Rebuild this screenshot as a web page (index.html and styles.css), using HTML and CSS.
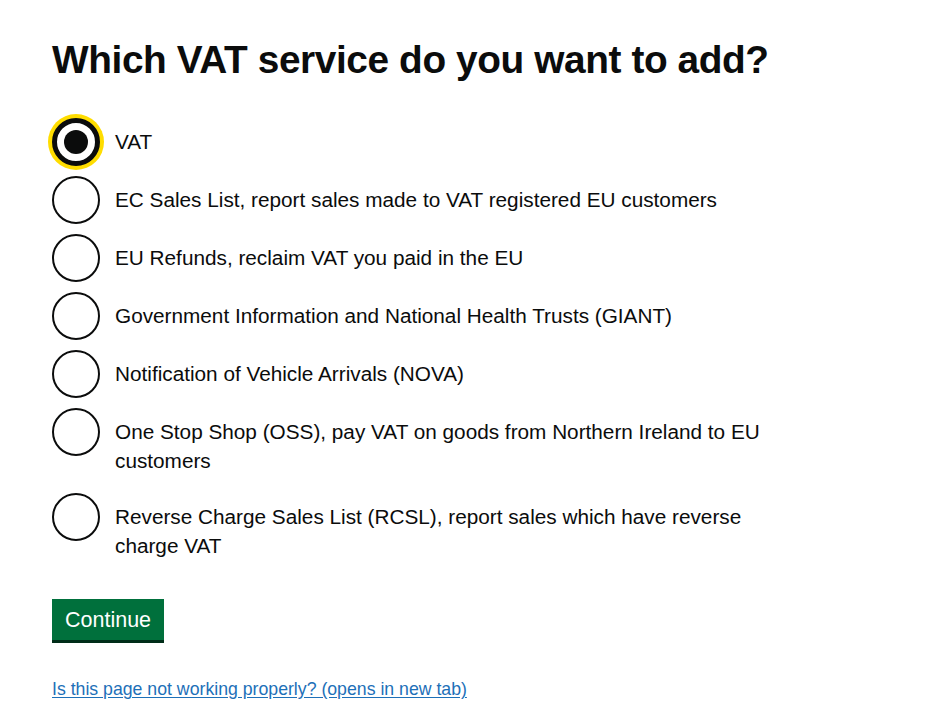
FILE: index.html
```html
<!DOCTYPE html>
<html lang="en">
<head>
<meta charset="utf-8">
<title>Which VAT service do you want to add?</title>
<link rel="stylesheet" href="styles.css">
</head>
<body>
<main class="page">
  <form class="form">
    <fieldset class="fieldset">
      <legend class="heading">Which VAT service do you want to add?</legend>
      <div class="radios">
        <label class="radio">
          <input class="radio-input" type="radio" name="service" value="vat" checked>
          <span class="radio-circle radio-circle--focused"></span>
          <span class="radio-label">VAT</span>
        </label>
        <label class="radio">
          <input class="radio-input" type="radio" name="service" value="ecsl">
          <span class="radio-circle"></span>
          <span class="radio-label">EC Sales List, report sales made to VAT registered EU customers</span>
        </label>
        <label class="radio">
          <input class="radio-input" type="radio" name="service" value="eurefunds">
          <span class="radio-circle"></span>
          <span class="radio-label">EU Refunds, reclaim VAT you paid in the EU</span>
        </label>
        <label class="radio">
          <input class="radio-input" type="radio" name="service" value="giant">
          <span class="radio-circle"></span>
          <span class="radio-label">Government Information and National Health Trusts (GIANT)</span>
        </label>
        <label class="radio">
          <input class="radio-input" type="radio" name="service" value="nova">
          <span class="radio-circle"></span>
          <span class="radio-label">Notification of Vehicle Arrivals (NOVA)</span>
        </label>
        <label class="radio">
          <input class="radio-input" type="radio" name="service" value="oss">
          <span class="radio-circle"></span>
          <span class="radio-label">One Stop Shop (OSS), pay VAT on goods from Northern Ireland to EU customers</span>
        </label>
        <label class="radio">
          <input class="radio-input" type="radio" name="service" value="rcsl">
          <span class="radio-circle"></span>
          <span class="radio-label">Reverse Charge Sales List (RCSL), report sales which have reverse charge VAT</span>
        </label>
      </div>
    </fieldset>
    <button class="button" type="button">Continue</button>
  </form>
  <a class="help-link" href="#">Is this page not working properly? (opens in new tab)</a>
</main>
</body>
</html>
```

FILE: styles.css
```css
* {
  box-sizing: border-box;
}

html, body {
  margin: 0;
  padding: 0;
  background: #ffffff;
}

body {
  font-family: "Liberation Sans", Arial, sans-serif;
  color: #0b0c0c;
}

.page {
  padding: 35px 0 0 52px;
  width: 820px;
}

.form {
  display: flex;
  flex-direction: column;
  align-items: flex-start;
}

.fieldset {
  margin: 0;
  padding: 0;
  border: 0;
  min-width: 0;
}

.heading {
  padding: 0;
  font-size: 38.8px;
  line-height: 50px;
  font-weight: 700;
  letter-spacing: -0.4px;
  margin: 0 0 33px;
  color: #0b0c0c;
}

.radios {
  display: flex;
  flex-direction: column;
  gap: 10px;
}

.radio {
  display: flex;
  align-items: flex-start;
  gap: 15px;
  min-height: 48px;
  cursor: pointer;
}

.radio-input {
  position: absolute;
  opacity: 0;
  width: 0;
  height: 0;
  margin: 0;
}

.radio-circle {
  flex: 0 0 48px;
  width: 48px;
  height: 48px;
  border: 2.5px solid #0b0c0c;
  border-radius: 50%;
  background: #ffffff;
  position: relative;
}

.radio-circle--focused {
  border-width: 5px;
  box-shadow: 0 0 0 4px #ffdd00;
}

.radio-circle--focused::after {
  content: "";
  position: absolute;
  left: 7px;
  top: 7px;
  width: 24px;
  height: 24px;
  border-radius: 50%;
  background: #0b0c0c;
}

.radio-label {
  font-size: 20.75px;
  line-height: 29px;
  padding: 9px 0 8px;
  max-width: 665px;
}

.button {
  margin-top: 31px;
  font-family: "Liberation Sans", Arial, sans-serif;
  font-size: 21.5px;
  line-height: 24px;
  padding: 9px 13px 8px;
  border: 0;
  background: #00703c;
  color: #ffffff;
  box-shadow: 0 3px 0 #002d18;
  cursor: pointer;
}

.help-link {
  display: inline-block;
  margin-top: 38px;
  font-size: 17.7px;
  line-height: 22px;
  color: #1d70b8;
  text-decoration: underline;
  text-underline-offset: 2px;
}
```
